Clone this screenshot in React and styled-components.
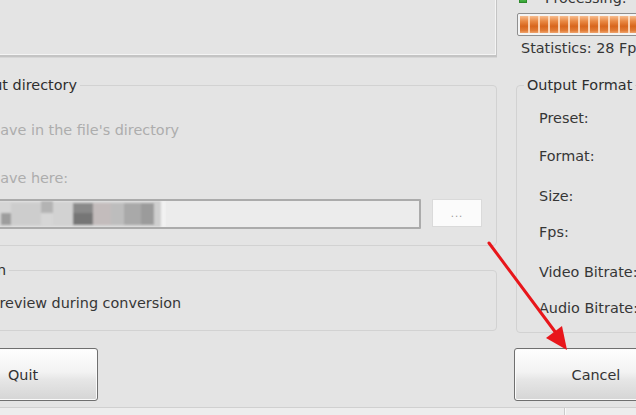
import React from 'react';
import styled, { createGlobalStyle } from 'styled-components';

const Global = createGlobalStyle`
  html, body { margin: 0; padding: 0; background: #e4e4e4; }
  body {
    font-family: "DejaVu Sans", Verdana, sans-serif;
    font-size: 14.4px;
    color: #363636;
  }
`;

const Page = styled.div`
  position: relative;
  width: 636px;
  height: 415px;
  overflow: hidden;
  background: #e4e4e4;
`;

const Window = styled.div`
  margin: -20px 0 0 -53px;
  display: grid;
  grid-template-columns: 550px 200px;
  grid-template-rows: 77px 276px 68px auto;
  column-gap: 19px;
`;

const PreviewPanel = styled.div`
  box-sizing: border-box;
  height: 100%;
  border: 1px solid #c4c4c4;
  border-bottom-width: 2px;
  background: #e4e4e4;
  box-shadow: inset -1px -1px 0 #f4f4f4, 0 1px 0 #d6d6d6;
`;

const StatusColumn = styled.div`
  display: flex;
  flex-direction: column;
  padding-top: 9px;
`;

const ProcessingRow = styled.div`
  display: flex;
  align-items: center;
  height: 18px;
  line-height: 18px;
  color: #363636;
  white-space: nowrap;
`;

const StateLed = styled.span`
  width: 8px;
  height: 9px;
  margin-left: 3px;
  margin-right: 18px;
  background: linear-gradient(#7fd47a, #35a533);
  border: 1px solid #2d8a2b;
  box-sizing: border-box;
`;

const ProgressTrack = styled.div`
  box-sizing: border-box;
  height: 24px;
  margin: 6px 0 0 1px;
  padding: 2px;
  border: 1px solid #8f8f8f;
  border-radius: 2px;
  background: #f4f4f4;
`;

const ProgressFill = styled.div`
  height: 100%;
  background:
    repeating-linear-gradient(to right, transparent 0 8px, rgba(255, 226, 200, 0.85) 8px 10px),
    linear-gradient(to bottom, #f7bc8e 0%, #e98a45 30%, #d8661d 60%, #e07b36 85%, #f0a46d 100%);
`;

const StatsLine = styled.div`
  margin-top: 3px;
  padding-left: 5px;
  height: 18px;
  line-height: 18px;
  white-space: nowrap;
  color: #363636;
`;

const Column = styled.div`
  display: flex;
  flex-direction: column;
  padding-top: 20px;
`;

const Group = styled.fieldset`
  margin: ${p => p.$top || 0}px 0 0 0;
  padding: 0;
  min-width: 0;
  border: 1px solid #d2d2d2;
  border-radius: 4px;
`;

const GroupTitle = styled.legend`
  margin-left: 7px;
  padding: 0 3px;
  line-height: 17px;
  color: #2e2e2e;
  white-space: nowrap;
`;

const GroupBody = styled.div`
  display: flex;
  flex-direction: column;
  padding: ${p => p.$pad};
`;

const OptionRow = styled.label`
  display: flex;
  align-items: center;
  gap: 8px;
  height: 18px;
  line-height: 18px;
  margin-top: ${p => p.$top || 0}px;
  padding-left: ${p => p.$indent || 0}px;
  color: ${p => (p.$disabled ? '#adadad' : '#363636')};
  white-space: nowrap;
`;

const RadioDot = styled.span`
  box-sizing: border-box;
  width: 13px;
  height: 13px;
  flex: none;
  border-radius: 50%;
  border: 1px solid ${p => (p.$disabled ? '#c6c6c6' : '#7a7a7a')};
  background: ${p => (p.$disabled ? '#ececec' : '#fff')};
`;

const CheckBox = styled.span`
  box-sizing: border-box;
  width: 13px;
  height: 13px;
  flex: none;
  border: 1px solid #8a8a8a;
  background: #fff;
`;

const PathRow = styled.div`
  display: flex;
  align-items: flex-start;
  gap: 11px;
  margin-top: 12px;
`;

const PathInput = styled.div`
  box-sizing: border-box;
  flex: 1;
  height: 30px;
  border: 2px solid #ababab;
  border-radius: 1px;
  background: #ececec;
  display: flex;
  align-items: stretch;
  overflow: hidden;
`;

const BrowseButton = styled.div`
  box-sizing: border-box;
  width: 50px;
  height: 28px;
  border: 1px solid #dadada;
  background: #fbfbfb;
  color: #9a9a9a;
  font-size: 10px;
  line-height: 28px;
  text-align: center;
  letter-spacing: 1px;
`;

const FieldLabel = styled.div`
  height: 18px;
  line-height: 18px;
  margin-top: ${p => p.$gap}px;
  color: #363636;
  white-space: nowrap;
`;

const PushButton = styled.button`
  box-sizing: border-box;
  width: ${p => p.$w}px;
  height: 53px;
  margin: 15px 0 0 ${p => p.$offset}px;
  padding: 0;
  font-family: inherit;
  font-size: 14.4px;
  color: #333;
  border: 1px solid #6f6f6f;
  border-radius: 3px;
  background: linear-gradient(#fefefe 0%, #f3f3f3 45%, #e6e6e6 60%, #d5d5d5 100%);
  box-shadow: inset 0 0 0 1px #fbfbfb;
`;

const StatusBar = styled.div`
  grid-column: 1 / -1;
  margin-top: 6px;
  height: 20px;
  border-top: 1px solid #d0d0d0;
  background: #ededed;
  display: grid;
  grid-template-columns: 618px 1fr;
`;

const StatusCell = styled.div`
  border-right: ${p => (p.$sep ? '1px solid #cbcbcb' : 'none')};
  box-shadow: ${p => (p.$sep ? '1px 0 0 #fafafa' : 'none')};
`;

const Overlay = styled.svg`
  position: absolute;
  left: 0;
  top: 0;
  pointer-events: none;
`;

const mosaic = [
  { x: -39, y: 0, w: 200, h: 26, c: '#d6d6d6' },
  { x: 0, y: 12, w: 10, h: 12, c: '#9d9d9d' },
  { x: 10, y: 2, w: 30, h: 22, c: '#cdcdcd' },
  { x: 40, y: 0, w: 12, h: 12, c: '#b3b3b3' },
  { x: 52, y: 2, w: 20, h: 22, c: '#d2d2d2' },
  { x: 72, y: 2, w: 20, h: 10, c: '#8a8a8a' },
  { x: 72, y: 12, w: 20, h: 12, c: '#767676' },
  { x: 92, y: 2, w: 18, h: 22, c: '#c3bcbc' },
  { x: 110, y: 2, w: 13, h: 22, c: '#bdbdbd' },
  { x: 123, y: 2, w: 17, h: 22, c: '#a9a9a9' },
  { x: 140, y: 2, w: 13, h: 22, c: '#9b9b9b' },
  { x: 153, y: 0, w: 7, h: 26, c: '#cfcfcf' },
  { x: 160, y: 0, w: 5, h: 26, c: '#f2f2f2' },
];

function BlurredPath() {
  return (
    <svg width="204" height="26" viewBox="-39 0 204 26" style={{ flex: 'none' }}>
      <defs>
        <filter id="soft" x="-5%" y="-20%" width="110%" height="140%">
          <feGaussianBlur stdDeviation="1.2" />
        </filter>
      </defs>
      <g filter="url(#soft)">
        {mosaic.map((m, i) => (
          <rect key={i} x={m.x} y={m.y} width={m.w} height={m.h} fill={m.c} />
        ))}
      </g>
    </svg>
  );
}

const formatFields = [
  { label: 'Preset:', gap: 0 },
  { label: 'Format:', gap: 20 },
  { label: 'Size:', gap: 22 },
  { label: 'Fps:', gap: 18 },
  { label: 'Video Bitrate:', gap: 22 },
  { label: 'Audio Bitrate:', gap: 18 },
];

export default function App() {
  return (
    <Page>
      <Global />
      <Window>
        <PreviewPanel />
        <StatusColumn>
          <ProcessingRow>
            <StateLed />
            Processing:
          </ProcessingRow>
          <ProgressTrack>
            <ProgressFill />
          </ProgressTrack>
          <StatsLine>Statistics: 28 Fps</StatsLine>
        </StatusColumn>

        <Column>
          <Group>
            <GroupTitle>Output directory</GroupTitle>
            <GroupBody $pad="27px 14px 16px 12px">
              <OptionRow $disabled $indent={10}>
                <RadioDot $disabled />
                Save in the file's directory
              </OptionRow>
              <OptionRow $disabled $indent={10} $top={30}>
                <RadioDot $disabled />
                Save here:
              </OptionRow>
              <PathRow>
                <PathInput>
                  <BlurredPath />
                </PathInput>
                <BrowseButton>...</BrowseButton>
              </PathRow>
            </GroupBody>
          </Group>
          <Group $top={16}>
            <GroupTitle>Option</GroupTitle>
            <GroupBody $pad="15px 0 18px 22px">
              <OptionRow>
                <CheckBox />
                Preview during conversion
              </OptionRow>
            </GroupBody>
          </Group>
        </Column>

        <Column>
          <Group>
            <GroupTitle>Output Format</GroupTitle>
            <GroupBody $pad="15px 0 15px 22px">
              {formatFields.map(f => (
                <FieldLabel key={f.label} $gap={f.gap}>{f.label}</FieldLabel>
              ))}
            </GroupBody>
          </Group>
        </Column>

        <div>
          <PushButton $w={150} $offset={1}>Quit</PushButton>
        </div>
        <div>
          <PushButton $w={164} $offset={-2}>Cancel</PushButton>
        </div>

        <StatusBar>
          <StatusCell $sep />
          <StatusCell />
        </StatusBar>
      </Window>

      <Overlay width="636" height="415" viewBox="0 0 636 415">
        <line x1="489" y1="243" x2="556" y2="333" stroke="#e8161b" strokeWidth="3" strokeLinecap="round" />
        <polygon points="567,350 546,338 562,326" fill="#e8161b" />
      </Overlay>
    </Page>
  );
}
